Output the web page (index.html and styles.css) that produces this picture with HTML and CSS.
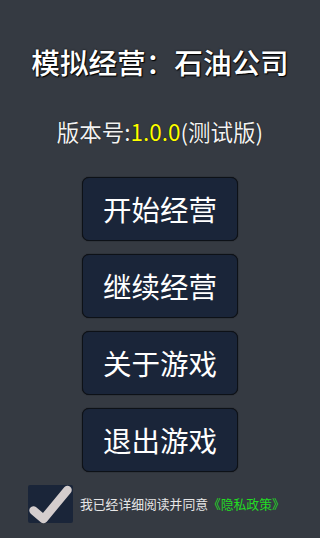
FILE: index.html
```html
<!DOCTYPE html>
<html lang="zh">
<head>
<meta charset="utf-8">
<link rel="stylesheet" href="styles.css">
</head>
<body>
<div class="page">
  <h1 class="title">模拟经营：石油公司</h1>
  <p class="version">版本号:<span class="ver-num">1.0.0</span>(测试版)</p>
  <div class="menu">
    <button class="btn">开始经营</button>
    <button class="btn">继续经营</button>
    <button class="btn">关于游戏</button>
    <button class="btn">退出游戏</button>
  </div>
  <div class="agree">
    <div class="check">
      <svg class="check-mark" width="45" height="38" viewBox="0 0 45 38">
        <path d="M5.5 25.5 L15.5 34 L39.5 5" fill="none" stroke="#d4cdcd" stroke-width="8.5" stroke-linecap="round" stroke-linejoin="round"/>
      </svg>
    </div>
    <span class="agree-text">我已经详细阅读并同意<span class="policy">《隐私政策》</span></span>
  </div>
</div>
</body>
</html>
```
FILE: styles.css
```css
html, body {
  margin: 0;
  padding: 0;
  background: #353a42;
  width: 320px;
  height: 538px;
  overflow: hidden;
}
.page {
  display: flex;
  flex-direction: column;
  align-items: center;
  font-family: "Noto Sans CJK SC", "Noto Sans", sans-serif;
  color: #ffffff;
}
.title {
  margin: 42px 0 0;
  font-size: 28.6px;
  font-weight: 500;
  line-height: 40px;
  text-shadow: 0 0 2px #000, 1px 1px 1px #000;
}
.version {
  margin: 34px 0 0;
  font-size: 22.5px;
  line-height: 30px;
  color: #f2f2f2;
  text-shadow: 0 0 1px #000;
}
.ver-num {
  color: #ffff00;
}
.menu {
  margin-top: 31px;
  display: flex;
  flex-direction: column;
  gap: 13px;
}
.btn {
  width: 156px;
  height: 64px;
  background: #1a2539;
  border: 1px solid #0d1117;
  border-radius: 7px;
  color: #ffffff;
  font-family: "Noto Sans CJK SC", "Noto Sans", sans-serif;
  font-size: 28.5px;
  line-height: 1;
  padding: 0;
  box-shadow: 0 0 1px #000;
}
.agree {
  margin-top: 13px;
  align-self: flex-start;
  margin-left: 28px;
  display: flex;
  align-items: center;
  gap: 7px;
}
.check {
  width: 45px;
  height: 38px;
  background: #1a2539;
  border-radius: 2px;
  position: relative;
}
.check-mark {
  display: block;
  overflow: visible;
}
.agree-text {
  font-size: 12.8px;
  color: #e6e6e6;
  line-height: 20px;
}
.policy {
  color: #22dd22;
}
```
